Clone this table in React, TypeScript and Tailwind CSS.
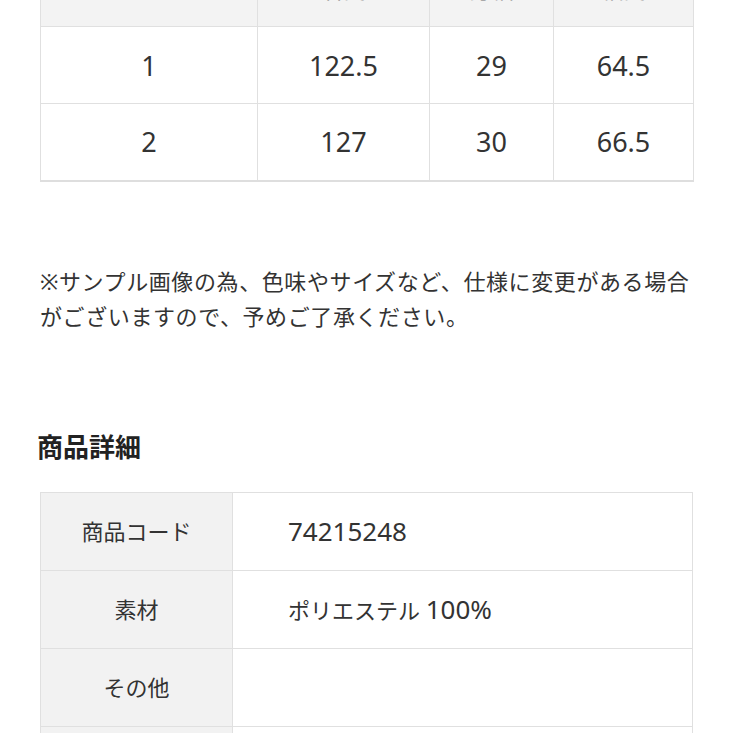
import type { ReactNode } from "react";

const font = { fontFamily: '"Noto Sans", "Noto Sans CJK JP", sans-serif' };

const sizeHead = ["サイズ", "着丈", "身幅", "袖丈"];
const sizeRows = [
  ["1", "122.5", "29", "64.5"],
  ["2", "127", "30", "66.5"],
];

const details: { label: string; value: ReactNode }[] = [
  { label: "商品コード", value: <span className="text-[26px]">74215248</span> },
  {
    label: "素材",
    value: (
      <>
        ポリエステル <span className="text-[26px]">100%</span>
      </>
    ),
  },
  { label: "その他", value: "" },
  { label: "原産国", value: "中国" },
];

export default function App() {
  return (
    <div className="h-[733px] overflow-hidden bg-white px-10 text-[#333]" style={font}>
      {/* Size table */}
      <table className="-mt-[46px] w-full table-fixed border-collapse border-b-2 border-[#dedede]">
        <colgroup>
          <col className="w-[217px]" />
          <col className="w-[172px]" />
          <col className="w-[124px]" />
          <col className="w-[140px]" />
        </colgroup>
        <thead>
          <tr className="h-[72px] bg-[#f3f3f3]">
            {sizeHead.map((h) => (
              <th key={h} className="border border-[#e0e0e0] pb-[2px] text-[22px] font-normal text-[#999]">
                {h}
              </th>
            ))}
          </tr>
        </thead>
        <tbody>
          {sizeRows.map((row) => (
            <tr key={row[0]} className="h-[77px]">
              {row.map((c, i) => (
                <td key={i} className="border border-[#e0e0e0] text-center text-[27px] leading-none">
                  {c}
                </td>
              ))}
            </tr>
          ))}
        </tbody>
      </table>

      {/* Note */}
      <p className="mt-[82px] text-[22px] leading-[35px] tracking-[0.6px]">
        ※サンプル画像の為、色味やサイズなど、仕様に変更がある場合
        <br />
        がございますので、予めご了承ください。
      </p>

      {/* Product details */}
      <h2 className="mt-[95px] -ml-[3px] text-[26px] font-bold leading-[36px] text-[#222]">商品詳細</h2>

      <table className="mt-[27px] w-full table-fixed border-collapse">
        <colgroup>
          <col className="w-[192px]" />
          <col />
        </colgroup>
        <tbody>
          {details.map((d) => (
            <tr key={d.label} className="h-[78px]">
              <th className="border border-[#e0e0e0] bg-[#f2f2f2] text-center text-[22px] font-normal">
                {d.label}
              </th>
              <td className="border border-[#e0e0e0] pl-[55px] text-[22px]">{d.value}</td>
            </tr>
          ))}
        </tbody>
      </table>
    </div>
  );
}
